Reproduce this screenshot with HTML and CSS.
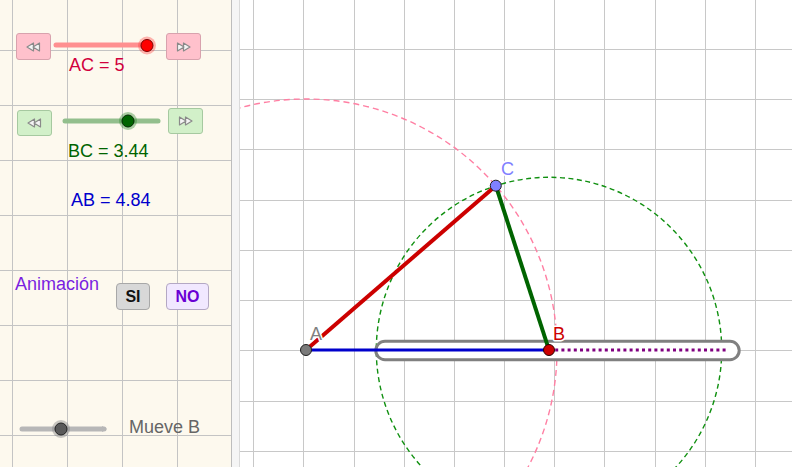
FILE: index.html
```html
<!DOCTYPE html>
<html lang="es">
<head>
<meta charset="utf-8">
<title>Triángulo</title>
<link rel="stylesheet" href="styles.css">
</head>
<body>
<div class="page">
  <div class="side">
    <div class="slider-row row-ac">
      <button class="sbtn pink"><svg width="15" height="10" viewBox="0 0 15 10"><path d="M1 5 L7.5 1 L7.5 9 Z M7 5 L13.5 1 L13.5 9 Z" fill="#f4f4f4" stroke="#8a8a8a" stroke-width="1.2" stroke-linejoin="round"/></svg></button>
      <svg class="track" width="115" height="27" viewBox="0 0 115 27">
        <line x1="5" y1="12" x2="96" y2="12" stroke="#ff9090" stroke-width="5" stroke-linecap="round"/>
        <circle cx="96" cy="12.5" r="9" fill="#ff3030" opacity="0.35"/>
        <circle cx="96" cy="12.5" r="6" fill="#ff0000" stroke="#7a0000" stroke-width="1"/>
      </svg>
      <button class="sbtn pink"><svg width="15" height="10" viewBox="0 0 15 10"><path d="M14 5 L7.5 1 L7.5 9 Z M8 5 L1.5 1 L1.5 9 Z" fill="#f4f4f4" stroke="#8a8a8a" stroke-width="1.2" stroke-linejoin="round"/></svg></button>
    </div>
    <div class="val val-ac">AC = 5</div>

    <div class="slider-row row-bc">
      <button class="sbtn green low"><svg width="15" height="10" viewBox="0 0 15 10"><path d="M1 5 L7.5 1 L7.5 9 Z M7 5 L13.5 1 L13.5 9 Z" fill="#f4f4f4" stroke="#8a8a8a" stroke-width="1.2" stroke-linejoin="round"/></svg></button>
      <svg class="track" width="116" height="28" viewBox="0 0 116 28">
        <line x1="13" y1="13" x2="106" y2="13" stroke="#93bf8d" stroke-width="5" stroke-linecap="round"/>
        <circle cx="76" cy="13" r="9" fill="#2f8a2f" opacity="0.4"/>
        <circle cx="76" cy="13" r="6" fill="#006400" stroke="#002a00" stroke-width="1"/>
      </svg>
      <button class="sbtn green high"><svg width="15" height="10" viewBox="0 0 15 10"><path d="M14 5 L7.5 1 L7.5 9 Z M8 5 L1.5 1 L1.5 9 Z" fill="#f4f4f4" stroke="#8a8a8a" stroke-width="1.2" stroke-linejoin="round"/></svg></button>
    </div>
    <div class="val val-bc">BC = 3.44</div>

    <div class="val val-ab">AB = 4.84</div>

    <div class="anim-row">
      <span class="anim-label">Animación</span>
      <button class="tbtn si">SI</button>
      <button class="tbtn no">NO</button>
    </div>

    <div class="move-row">
      <svg class="track" width="100" height="22" viewBox="0 0 100 22">
        <line x1="6" y1="11" x2="88" y2="11" stroke="#b7b7b7" stroke-width="5" stroke-linecap="round"/>
        <path d="M86 8 L91 11 L86 14 Z" fill="#b7b7b7"/>
        <circle cx="45" cy="11" r="9" fill="#888" opacity="0.45"/>
        <circle cx="45" cy="11" r="6" fill="#5a5a5a" stroke="#222" stroke-width="1"/>
      </svg>
      <span class="move-label">Mueve B</span>
    </div>
  </div>

  <div class="divider"></div>

  <svg class="canvas" width="552" height="467" viewBox="0 0 552 467">
    <g stroke="#c8c8c8" stroke-width="1">
      <line x1="13.5" y1="0" x2="13.5" y2="467"/>
      <line x1="63.5" y1="0" x2="63.5" y2="467"/>
      <line x1="114.5" y1="0" x2="114.5" y2="467"/>
      <line x1="164.5" y1="0" x2="164.5" y2="467"/>
      <line x1="214.5" y1="0" x2="214.5" y2="467"/>
      <line x1="264.5" y1="0" x2="264.5" y2="467"/>
      <line x1="314.5" y1="0" x2="314.5" y2="467"/>
      <line x1="364.5" y1="0" x2="364.5" y2="467"/>
      <line x1="415.5" y1="0" x2="415.5" y2="467"/>
      <line x1="465.5" y1="0" x2="465.5" y2="467"/>
      <line x1="515.5" y1="0" x2="515.5" y2="467"/>
      <line x1="0" y1="49.5" x2="552" y2="49.5"/>
      <line x1="0" y1="99.5" x2="552" y2="99.5"/>
      <line x1="0" y1="149.5" x2="552" y2="149.5"/>
      <line x1="0" y1="200.5" x2="552" y2="200.5"/>
      <line x1="0" y1="250.5" x2="552" y2="250.5"/>
      <line x1="0" y1="300.5" x2="552" y2="300.5"/>
      <line x1="0" y1="350.5" x2="552" y2="350.5"/>
      <line x1="0" y1="401.5" x2="552" y2="401.5"/>
      <line x1="0" y1="451.5" x2="552" y2="451.5"/>
    </g>
    <circle cx="66" cy="350" r="251" fill="none" stroke="#ff7fa3" stroke-width="1.4" stroke-dasharray="6 4"/>
    <circle cx="309" cy="350" r="172.7" fill="none" stroke="#109010" stroke-width="1.4" stroke-dasharray="5 3.5"/>
    <rect x="135.8" y="341.3" width="363.4" height="18.4" rx="9.2" ry="9.2" fill="#ffffff" stroke="#808080" stroke-width="3"/>
    <line x1="309" y1="350" x2="488" y2="350" stroke="#800080" stroke-width="3" stroke-dasharray="3 3.2"/>
    <line x1="66" y1="350" x2="309" y2="350" stroke="#0000cc" stroke-width="3.2"/>
    <line x1="66" y1="350" x2="255.8" y2="185.7" stroke="#cc0000" stroke-width="4"/>
    <line x1="255.8" y1="185.7" x2="309" y2="350" stroke="#006400" stroke-width="4"/>
    <g class="lbl">
      <text x="70" y="340" fill="#808080">A</text>
      <text x="313" y="340" fill="#cc0000">B</text>
      <text x="261" y="175" fill="#8080ff">C</text>
    </g>
    <circle cx="66" cy="350" r="5.5" fill="#7a7a7a" stroke="#1f1f1f" stroke-width="1"/>
    <circle cx="309" cy="350" r="5.5" fill="#cc0000" stroke="#2a0000" stroke-width="1"/>
    <circle cx="255.8" cy="185.7" r="5.5" fill="#8080ff" stroke="#1f1f1f" stroke-width="1"/>
  </svg>
</div>
</body>
</html>
```

FILE: styles.css
```css
html, body {
  margin: 0;
  padding: 0;
  background: #ffffff;
}

body {
  font-family: "Liberation Sans", Arial, sans-serif;
}

.page {
  display: flex;
  width: 792px;
  height: 467px;
  overflow: hidden;
}

.side {
  width: 231px;
  height: 467px;
  flex: none;
  background-color: #fdf9ee;
  background-image:
    linear-gradient(to right, #c4c4c4 1px, transparent 1px),
    linear-gradient(to bottom, #c4c4c4 1px, transparent 1px);
  background-size: 55px 55px;
  background-position: 12px 50px;
  display: flex;
  flex-direction: column;
  align-items: flex-start;
}

.divider {
  width: 9px;
  height: 467px;
  flex: none;
  box-sizing: border-box;
  border-left: 1px solid #bdbdbd;
  border-right: 1px solid #dadada;
  background: #f5f5f5;
}

.canvas {
  display: block;
  flex: none;
  width: 552px;
  height: 467px;
  background: #ffffff;
}

.slider-row {
  display: flex;
  align-items: flex-start;
}

.row-ac {
  margin-top: 33px;
  padding-left: 16px;
  height: 27px;
}

.row-bc {
  margin-top: 34px;
  padding-left: 17px;
  height: 28px;
}

.track {
  display: block;
  flex: none;
}

.sbtn {
  width: 35px;
  height: 27px;
  box-sizing: border-box;
  margin: 0;
  padding: 0;
  border-radius: 3px;
  display: flex;
  align-items: center;
  justify-content: center;
  flex: none;
}

.sbtn svg {
  display: block;
}

.pink {
  background: #ffc1cc;
  border: 1px solid #d8a2ad;
}

.green {
  background: #d2f0c9;
  border: 1px solid #a6c9a0;
  height: 26px;
}

.green.low {
  align-self: flex-end;
}

.green.high {
  align-self: flex-start;
}

.val {
  font-size: 18px;
  line-height: 18px;
  white-space: nowrap;
}

.val-ac {
  margin-top: -4px;
  padding-left: 69px;
  color: #d1003c;
}

.val-bc {
  margin-top: 6px;
  padding-left: 68px;
  color: #006400;
}

.val-ab {
  margin-top: 31px;
  padding-left: 71px;
  color: #0000cc;
}

.anim-row {
  display: flex;
  align-items: flex-start;
  margin-top: 66px;
  padding-left: 15px;
}

.anim-label {
  width: 101px;
  font-size: 18px;
  line-height: 18px;
  color: #7a1fe0;
}

.tbtn {
  margin: 8px 0 0 0;
  padding: 0;
  height: 27px;
  box-sizing: border-box;
  border-radius: 4px;
  font-family: "Liberation Sans", Arial, sans-serif;
  font-weight: bold;
  font-size: 16px;
  line-height: 25px;
  text-align: center;
}

.si {
  width: 34px;
  background: #d8d8d8;
  border: 1px solid #a8a8a8;
  color: #111111;
}

.no {
  width: 43px;
  margin-left: 16px;
  background: #f1e8ff;
  border: 1px solid #b4a8c4;
  color: #6a00d4;
}

.move-row {
  display: flex;
  align-items: flex-start;
  margin-top: 108px;
  padding-left: 16px;
}

.move-label {
  margin-left: 13px;
  font-size: 18px;
  line-height: 18px;
  color: #666666;
  white-space: nowrap;
}

.lbl text {
  font-family: "Liberation Sans", Arial, sans-serif;
  font-size: 18px;
  stroke: #ffffff;
  stroke-width: 3px;
  stroke-linejoin: round;
  paint-order: stroke;
}
```
